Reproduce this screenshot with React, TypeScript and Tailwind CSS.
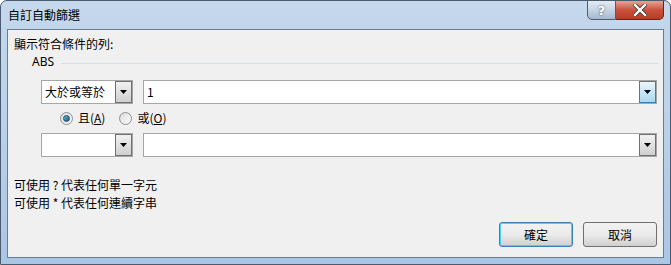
import React from "react";

const font = { fontFamily: '"Noto Sans CJK TC", "Noto Sans", sans-serif' };

function DropBtn({ active = false }: { active?: boolean }) {
  return (
    <div
      className={
        "w-[17px] h-[22px] flex items-center justify-center border " +
        (active
          ? "border-[#3c7fb1] bg-gradient-to-b from-[#eaf6fd] to-[#a7d9f5]"
          : "border-[#707070] bg-gradient-to-b from-[#f2f2f2] to-[#cfcfcf]")
      }
    >
      <svg width="7" height="4" viewBox="0 0 7 4">
        <path d="M0 0H7L3.5 4Z" fill="#000" />
      </svg>
    </div>
  );
}

function Combo({ text = "" }: { text?: string }) {
  return (
    <div className="w-[92px] h-[24px] border border-[#a6a6a6] bg-white flex items-center justify-between pl-[3px] pr-0">
      <span className="text-[12px] text-black leading-none">{text}</span>
      <DropBtn />
    </div>
  );
}

function ValueBox({ text = "", active = false }: { text?: string; active?: boolean }) {
  return (
    <div className="w-[514px] h-[24px] border border-[#a6a6a6] bg-white flex items-center justify-between pl-[3px]">
      <span className="text-[12px] text-black leading-none">{text}</span>
      <DropBtn active={active} />
    </div>
  );
}

function Radio({ checked }: { checked: boolean }) {
  return (
    <div className="w-[13px] h-[13px] rounded-full border border-[#8e8f8f] bg-gradient-to-br from-[#dcdcdc] to-[#fbfbfb] flex items-center justify-center">
      {checked && (
        <div className="w-[7px] h-[7px] rounded-full bg-gradient-to-br from-[#6ab4dc] to-[#1c5580] border border-[#1f4f74]" />
      )}
    </div>
  );
}

export default function App() {
  return (
    <div
      className="w-[671px] h-[265px] relative overflow-hidden rounded-t-[7px] border border-[#4a5b70] bg-gradient-to-b from-[#c5d8ec] via-[#b9d1ea] to-[#a9c6e4]"
      style={font}
    >
      {/* title bar */}
      <div className="h-[28px] flex items-start">
        <div className="pl-[7px] pt-[8px] text-[12px] text-black leading-none">自訂自動篩選</div>
      </div>
      {/* caption buttons */}
      <div className="absolute top-[-1px] right-[6px] flex">
        <div className="w-[29px] h-[20px] rounded-bl-[5px] border border-[#4b5e73] bg-gradient-to-b from-[#e3ebf3] via-[#c6d5e4] to-[#a4b8ce] flex items-center justify-center text-white font-bold text-[13px] leading-none" style={{ fontFamily: '"DejaVu Sans", sans-serif', textShadow: "0 0 2px #334" }}>
          ?
        </div>
        <div className="w-[48px] h-[20px] rounded-br-[5px] border border-l-0 border-[#5a2a22] bg-gradient-to-b from-[#e8a093] via-[#c8513c] to-[#b93a22] flex items-center justify-center">
          <svg width="14" height="12" viewBox="0 0 14 12">
            <path d="M2 1L12 11M12 1L2 11" stroke="#3a3a3a" strokeWidth="4" strokeLinecap="square" />
            <path d="M2 1L12 11M12 1L2 11" stroke="#fff" strokeWidth="2.4" strokeLinecap="square" />
          </svg>
        </div>
      </div>

      {/* client */}
      <div className="ml-[6px] w-[657px] h-[229px] border border-[#6b7c8e] bg-[#f0f0f0] flex flex-col text-black">
        <div className="pl-[6px] pt-[7px] text-[12px] leading-[14px]">顯示符合條件的列:</div>
        <div className="flex items-center pl-[24px] mt-[4px] pr-[5px]">
          <span className="text-[12px] leading-[14px]" style={{ fontFamily: '"Noto Sans", sans-serif' }}>ABS</span>
          <div className="flex-1 h-px bg-[#d5dfe8] ml-[7px] mt-[2px]" />
        </div>
        <div className="flex gap-[10px] pl-[33px] mt-[11px]">
          <Combo text="大於或等於" />
          <ValueBox text="1" active />
        </div>
        <div className="flex items-center pl-[52px] mt-[7px] h-[14px] text-[12px] leading-none">
          <Radio checked />
          <span className="ml-[5px]">且(<span className="underline">A</span>)</span>
          <div className="ml-[14px]"><Radio checked={false} /></div>
          <span className="ml-[5px]">或(<span className="underline">O</span>)</span>
        </div>
        <div className="flex gap-[10px] pl-[33px] mt-[8px]">
          <Combo />
          <ValueBox />
        </div>
        <div className="pl-[6px] mt-[19px] text-[12px]">
          <div className="h-[18px] leading-[18px]">可使用 ? 代表任何單一字元</div>
          <div className="h-[18px] leading-[18px]">可使用 * 代表任何連續字串</div>
        </div>
        <div className="flex justify-end gap-[10px] pr-[6px] mt-[10px]">
          <div className="w-[74px] h-[25px] rounded-[3px] border border-[#3c7fb1] bg-gradient-to-b from-[#f2f2f2] via-[#ebebeb] to-[#cfcfcf] flex items-center justify-center text-[12px] shadow-[inset_0_0_0_1px_#48d1f9]">
            確定
          </div>
          <div className="w-[74px] h-[25px] rounded-[3px] border border-[#707070] bg-gradient-to-b from-[#f2f2f2] via-[#ebebeb] to-[#cfcfcf] flex items-center justify-center text-[12px]">
            取消
          </div>
        </div>
      </div>
    </div>
  );
}
